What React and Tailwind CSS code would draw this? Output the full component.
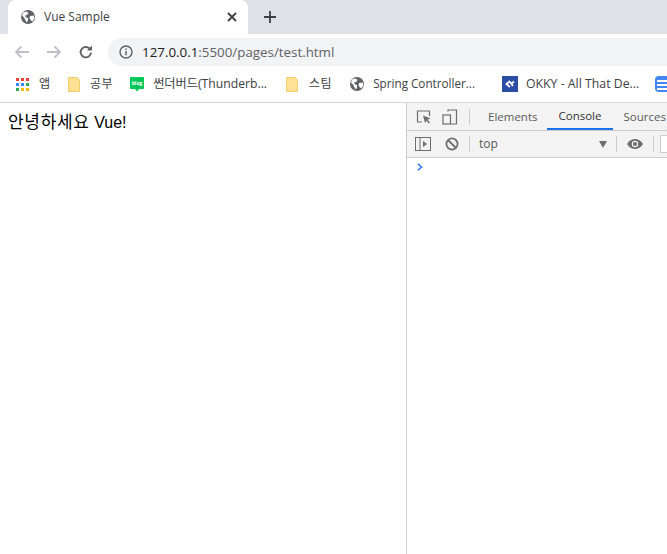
import React from "react";

const uiFont = { fontFamily: '"Open Sans", "Noto Sans CJK KR", sans-serif' };

const Globe = ({ className = "" }) => (
  <svg viewBox="0 0 16 16" width="16" height="16" className={className}>
    <circle cx="8" cy="8" r="7" fill="#5f6368" />
    <path d="M3 3.5 L6.5 2.500 L8.500 4 L7 6 L5 6.500 L6 8.500 L8 9 L8 11 L7 13.500 L5.500 11.500 L4 8.500 L2 6.500 Z" fill="#fff" />
    <path d="M10 7 L13.500 6.500 L14.500 9 L12.500 12.500 L10.500 11 L9.500 9 Z" fill="#fff" />
  </svg>
);

const Folder = () => (
  <svg viewBox="0 0 12 15" width="12" height="15">
    <path d="M.5.5h8.700l2.300 2.300v11.700H.5z" fill="#fde293" stroke="#f0cd68" />
  </svg>
);

const Apps = () => {
  const colors = ["#ea4335", "#ea4335", "#ea4335", "#4285f4", "#4285f4", "#34a853", "#34a853", "#fbbc04", "#fbbc04"];
  return (
    <div className="grid grid-cols-3 gap-[2px] w-[13px]">
      {colors.map((c, i) => (
        <span key={i} className="w-[3px] h-[3px]" style={{ background: c }} />
      ))}
    </div>
  );
};

const Bookmark = ({ icon, label, className = "" }) => (
  <div className={`flex items-center shrink-0 ${className}`}>
    <span className="w-4 flex justify-center">{icon}</span>
    <span className="text-[12px] text-[#3c4043] whitespace-nowrap">{label}</span>
  </div>
);

export default function App() {
  return (
    <div className="w-[667px] h-[554px] overflow-hidden flex flex-col bg-white" style={uiFont}>
      {/* tab strip */}
      <div className="h-[34px] bg-[#dee1e6] flex items-end pl-2 shrink-0">
        <div className="w-[240px] h-[34px] bg-white rounded-t-lg flex items-center pl-3 pr-[11px]">
          <Globe />
          <span className="ml-2 text-[12px] text-[#3c4043] flex-1">Vue Sample</span>
          <svg viewBox="0 0 10 10" width="10" height="10">
            <path d="M1 1l8 8M9 1l-8 8" stroke="#3c4043" strokeWidth="1.800" />
          </svg>
        </div>
        <svg viewBox="0 0 12 12" width="12" height="12" className="ml-[16px] mb-[11px]">
          <path d="M6 0v12M0 6h12" stroke="#3c4043" strokeWidth="1.800" />
        </svg>
      </div>

      {/* address bar */}
      <div className="h-[32px] flex items-center shrink-0 pl-[14px] pt-[4px]">
        <svg viewBox="0 0 16 14" width="16" height="14">
          <path d="M15 7H2M7.500 1.500L2 7l5.500 5.500" fill="none" stroke="#bdc1c6" strokeWidth="1.800" />
        </svg>
        <svg viewBox="0 0 16 14" width="16" height="14" className="ml-[16px]">
          <path d="M1 7h13M8.500 1.500L14 7l-5.500 5.500" fill="none" stroke="#bdc1c6" strokeWidth="1.800" />
        </svg>
        <svg viewBox="0 0 16 16" width="16" height="16" className="ml-[16px]">
          <path d="M13 8.500a5.200 5.200 0 1 1-1.500-4" fill="none" stroke="#5f6368" strokeWidth="1.900" />
          <path d="M14 1.500v5h-5z" fill="#5f6368" />
        </svg>
        <div className="ml-[14px] h-[28px] flex-1 bg-[#f1f3f4] rounded-l-full flex items-center pl-[11px]">
          <svg viewBox="0 0 14 14" width="14" height="14">
            <circle cx="7" cy="7" r="6" fill="none" stroke="#5f6368" strokeWidth="1.400" />
            <path d="M7 6v4.200M7 3.400v1.500" stroke="#5f6368" strokeWidth="1.500" />
          </svg>
          <span className="ml-[9px] text-[13.350px] text-[#5f6368] whitespace-nowrap">
            <span className="text-[#202124]">127.0.0.1</span>:5500/pages/test.html
          </span>
        </div>
      </div>

      {/* bookmarks */}
      <div className="h-[37px] flex items-center shrink-0 border-b border-[#d5d7db] pl-[14px] overflow-hidden">
        <Bookmark icon={<Apps />} label={<span className="ml-[9px]">앱</span>} />
        <Bookmark className="ml-[16px]" icon={<Folder />} label={<span className="ml-[8px] tracking-[0.5px]">공부</span>} />
        <Bookmark
          className="ml-[16px]"
          icon={
            <svg viewBox="0 0 16 16" width="16" height="16">
              <path d="M2 1h12a1 1 0 0 1 1 1v10a1 1 0 0 1-1 1h-4l-2 2.500L6 13H2a1 1 0 0 1-1-1V2a1 1 0 0 1 1-1z" fill="#03c75a" />
              <text x="8" y="9" fontSize="5" fontWeight="700" fill="#fff" textAnchor="middle">blog</text>
            </svg>
          }
          label={<span className="ml-[8px] text-[12.200px]">썬더버드(Thunderb...</span>}
        />
        <Bookmark className="ml-[17px]" icon={<Folder />} label={<span className="ml-[9px] tracking-[0.5px]">스팀</span>} />
        <Bookmark className="ml-[17px]" icon={<Globe />} label={<span className="ml-[8px] text-[11.700px]">Spring Controller...</span>} />
        <Bookmark
          className="ml-[27px]"
          icon={
            <svg viewBox="0 0 16 16" width="16" height="16">
              <rect width="16" height="16" fill="#2a4ea6" />
              <path d="M8 5L4.500 8 8 11M8 6l3 4M12 5.500L9 8" fill="none" stroke="#fff" strokeWidth="1.800" />
            </svg>
          }
          label={<span className="ml-[8px] text-[12.300px]">OKKY - All That De...</span>}
        />
        <div className="ml-[16px] w-4 h-4 shrink-0 bg-[#4285f4] rounded-sm flex flex-col justify-center gap-[2px] px-[2px] pt-[3px] pb-[1px]">
          <span className="h-[2px] bg-white" />
          <span className="h-[2px] bg-white" />
          <span className="h-[2px] bg-white" />
        </div>
      </div>

      {/* page + devtools */}
      <div className="flex flex-1 min-h-0">
        <div className="w-[406px] pl-2 pt-[9px] text-[16px] leading-[21px] text-black shrink-0 whitespace-pre" style={{ fontFamily: '"Liberation Sans", "Noto Sans CJK KR", sans-serif' }}>
          <span className="text-[17px] tracking-[0.7px]">안녕하세요</span> Vue!
        </div>
        <div className="flex-1 border-l border-[#cdcdcd] flex flex-col min-w-0">
          <div className="h-[28px] bg-[#f3f3f3] border-b border-[#cdcdcd] flex items-center shrink-0 pl-[9px] overflow-hidden">
            <svg viewBox="0 0 16 16" width="16" height="16" className="shrink-0">
              <path d="M6 13H1.500V2h12v5" fill="none" stroke="#6e6e6e" strokeWidth="1.200" />
              <path d="M7 6.500l7.500 3-3 1.200 2.500 2.800-1.200 1-2.400-2.800L9 14z" fill="#6e6e6e" />
            </svg>
            <svg viewBox="0 0 16 16" width="16" height="16" className="ml-[10px] shrink-0">
              <path d="M6 2.500V1h8.500v14H9" fill="none" stroke="#6e6e6e" strokeWidth="1.200" />
              <rect x="1" y="6" width="7.500" height="9" fill="none" stroke="#6e6e6e" strokeWidth="1.200" />
            </svg>
            <span className="ml-[11px] w-px h-4 bg-[#ccc] shrink-0" />
            <span className="ml-[18px] text-[11.500px] text-[#5a5a5a] shrink-0">Elements</span>
            <span className="ml-[9px] px-[12px] h-full flex items-center text-[11.500px] text-[#333] border-b-2 border-[#1a73e8] shrink-0">Console</span>
            <span className="ml-[10px] text-[11.500px] text-[#5a5a5a] shrink-0 whitespace-nowrap">Sources</span>
          </div>
          <div className="h-[27px] bg-[#f3f3f3] border-b border-[#cdcdcd] flex items-center shrink-0 pl-[8px] overflow-hidden">
            <svg viewBox="0 0 16 14" width="16" height="14" className="shrink-0">
              <rect x=".5" y=".5" width="15" height="13" fill="none" stroke="#6e6e6e" />
              <path d="M5 1v12" stroke="#6e6e6e" />
              <path d="M8 4l4 3-4 3z" fill="#6e6e6e" />
            </svg>
            <svg viewBox="0 0 14 14" width="14" height="14" className="ml-[14px] shrink-0">
              <circle cx="7" cy="7" r="5.600" fill="none" stroke="#6e6e6e" strokeWidth="1.800" />
              <path d="M3 3l8 8" stroke="#6e6e6e" strokeWidth="1.800" />
            </svg>
            <span className="ml-[10px] w-px h-4 bg-[#ccc] shrink-0" />
            <span className="ml-[9px] text-[12px] text-[#5a5a5a] w-[120px] shrink-0">top</span>
            <svg viewBox="0 0 8 7" width="8" height="7" className="shrink-0">
              <path d="M0 0h8L4 7z" fill="#6e6e6e" />
            </svg>
            <span className="ml-[9px] w-px h-4 bg-[#ccc] shrink-0" />
            <svg viewBox="0 0 16 12" width="16" height="12" className="ml-[10px] shrink-0">
              <path d="M0 6c2-3.600 5-5 8-5s6 1.400 8 5c-2 3.600-5 5-8 5S2 9.600 0 6z" fill="#6e6e6e" />
              <circle cx="8" cy="6" r="3.200" fill="#f3f3f3" />
              <circle cx="8" cy="6" r="2" fill="#6e6e6e" />
            </svg>
            <span className="ml-[10px] w-px h-4 bg-[#ccc] shrink-0" />
            <span className="ml-[6px] w-3 h-[18px] bg-white border border-[#ccc] shrink-0" />
          </div>
          <div className="pl-[10px] pt-[5px]">
            <svg viewBox="0 0 6 8" width="6" height="8">
              <path d="M1 .8L4.500 4 1 7.200" fill="none" stroke="#367cf1" strokeWidth="1.600" />
            </svg>
          </div>
        </div>
      </div>
    </div>
  );
}
